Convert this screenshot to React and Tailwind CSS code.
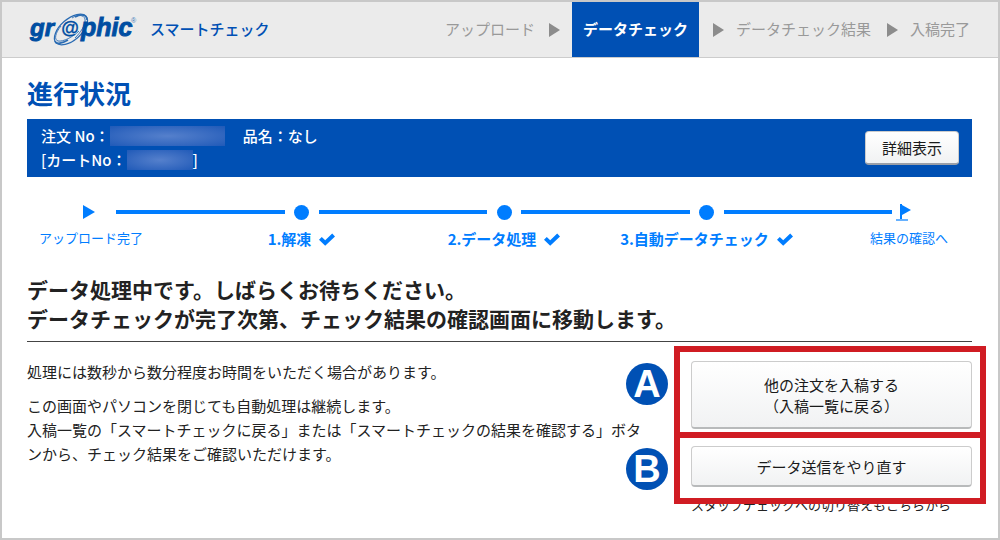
const steps = [
  { label: "1.解凍" },
  { label: "2.データ処理" },
  { label: "3.自動データチェック" },
];

function Logo() {
  return (
    <svg width="108" height="40" viewBox="0 -4 108 40" role="img" aria-label="gr@phic" className="shrink-0 overflow-visible">
      <g fill="none" stroke="#2b6cb3">
        <ellipse cx="41" cy="15.5" rx="20" ry="10.5" strokeWidth="1.2" transform="rotate(-41 41 15.5)" />
        <path d="M42 4C48 0 54 1 55 5C56 11 50 19 45 24" strokeWidth="0.9" />
        <path d="M31 12C25 19 24 26 28 27C33 28 43 23 49 17" strokeWidth="0.9" />
        <path d="M25 27C26 31 33 29 38 26" strokeWidth="1.6" />
        <path d="M45 3C52 -1 57 1 57 6" strokeWidth="1.6" />
      </g>
      <g
        fill="#004ea2"
        stroke="#004ea2"
        strokeWidth="0.9"
        fontFamily="'Liberation Sans', sans-serif"
        fontStyle="italic"
        fontWeight="700"
      >
        <text x="0" y="22" fontSize="24">gr</text>
        <text x="31" y="20" fontSize="18" strokeWidth="0.3">@</text>
        <text x="51" y="22" fontSize="25">phic</text>
      </g>
      <text x="101" y="9" fontSize="7" fill="#3c78b9" fontFamily="'Liberation Sans', sans-serif">®</text>
    </svg>
  );
}

function Arrow() {
  return (
    <svg width="11" height="14" viewBox="0 0 11 14" fill="#8c8c8c" aria-hidden="true" className="shrink-0">
      <path d="M0 0L11 7L0 14Z" />
    </svg>
  );
}

function Header() {
  return (
    <header className="flex h-14 items-stretch justify-between border-b border-[#cccccc] bg-[#ebebeb] px-7 whitespace-nowrap">
      <div className="flex items-center gap-3">
        <Logo />
        <span className="text-[15px] font-medium text-[#0050b4]">スマートチェック</span>
      </div>
      <ol className="flex items-center text-[15px] text-[#999999]">
        <li className="flex items-center gap-[14px] pr-3">
          アップロード
          <Arrow />
        </li>
        <li aria-current="step" className="flex items-center self-stretch bg-[#0050b4] px-[11px] font-bold text-white">
          データチェック
        </li>
        <li className="flex items-center gap-3 pl-[14px]">
          <Arrow />
          データチェック結果
        </li>
        <li className="flex items-center gap-3 pl-4">
          <Arrow />
          入稿完了
        </li>
      </ol>
    </header>
  );
}

function Line() {
  return (
    <li aria-hidden="true" className="flex h-5 flex-1 items-center">
      <span className="h-1 w-full bg-[#007dff]" />
    </li>
  );
}

function StepItem({ label }) {
  return (
    <>
      <Line />
      <li className="flex w-[34px] flex-col items-center">
        <span className="flex h-5 items-center">
          <span className="size-[15px] rounded-full bg-current" />
        </span>
        <span className="mt-[7px] flex items-center gap-2 text-[15px] leading-5 font-bold">
          {label}
          <svg width="16" height="13" viewBox="0 0 16 13" fill="currentColor" role="img" aria-label="完了">
            <path d="M0 6.8L2.8 4L6.2 7.2L13.2 0.6L16 3.4L6.2 12.8Z" />
          </svg>
        </span>
      </li>
    </>
  );
}

function Stepper() {
  return (
    <ol className="mt-[25px] flex items-start pr-[46px] pl-[39px] whitespace-nowrap text-[#007dff]">
      <li className="flex w-[50px] flex-col items-center">
        <svg width="16" height="20" viewBox="0 0 16 20" fill="currentColor" aria-hidden="true">
          <path d="M0 3L12 10L0 17Z" />
        </svg>
        <span className="mt-1.5 text-[13px] leading-5">アップロード完了</span>
      </li>
      {steps.map((step) => (
        <StepItem key={step.label} label={step.label} />
      ))}
      <Line />
      <li className="flex w-[34px] flex-col items-center">
        <svg width="26" height="20" viewBox="0 0 26 20" fill="currentColor" aria-hidden="true">
          <path d="M4 2H6V17H4Z" />
          <path d="M6 3L15 8L6 13Z" />
          <path d="M0 17H12V19H0Z" opacity="0.6" />
        </svg>
        <span className="mt-1.5 text-[13px] leading-5">結果の確認へ</span>
      </li>
    </ol>
  );
}

const buttonStyle =
  "w-full cursor-pointer rounded-sm border border-[#cccccc] border-b-2 border-b-[#b8babb] bg-linear-to-b from-white to-[#f1f2f3] text-[15px] leading-[21px] text-[#1a1a1a]";

function Marker({ children }) {
  return (
    <span className="absolute top-0.5 -left-[65px] flex size-[42px] items-center justify-center rounded-full bg-[#0050b4] font-['Liberation_Sans',sans-serif] text-[38px] leading-none font-bold text-white">
      {children}
    </span>
  );
}

export default function App() {
  return (
    <div className="min-h-screen border-2 border-[#c8c8c8] bg-white font-['Noto_Sans_CJK_JP',sans-serif] text-[#222222]">
      <Header />

      <main className="pr-[26px] pl-[25px]">
        <h1 className="pt-[17px] pb-2 text-[26px] leading-9 font-bold text-[#0050b4]">進行状況</h1>

        {/* 注文情報 */}
        <section className="flex items-center justify-between bg-[#0050b4] py-[5px] pr-[13px] pl-[14px] text-[15px] leading-6 font-medium text-white">
          <div>
            <p className="flex items-center">
              注文 No：
              <span className="h-5 w-[115px] bg-radial from-[#5580cc] to-[#1f5ab8]" />
              <span className="ml-[18px]">品名：なし</span>
            </p>
            <p className="flex items-center">
              [カートNo：
              <span className="h-5 w-[66px] bg-radial from-[#5580cc] to-[#1f5ab8]" />]
            </p>
          </div>
          <button
            type="button"
            className="h-[34px] w-[94px] cursor-pointer rounded-sm border border-[#cccccc] border-b-2 border-b-[#9a9fa8] bg-linear-to-b from-white to-[#f1f2f3] text-[15px] leading-[21px] font-normal text-[#1a1a1a]"
          >
            詳細表示
          </button>
        </section>

        <Stepper />

        <h2 className="mt-[26px] border-b border-[#444444] pb-2 text-[21px] leading-[29px] font-bold">
          データ処理中です。しばらくお待ちください。
          <br />
          データチェックが完了次第、チェック結果の確認画面に移動します。
        </h2>

        <div className="flex items-start justify-between">
          <div className="w-[622px] pt-[18px] text-[15px] leading-6">
            <p>処理には数秒から数分程度お時間をいただく場合があります。</p>
            <p className="mt-[10px]">
              この画面やパソコンを閉じても自動処理は継続します。
              <br />
              入稿一覧の「スマートチェックに戻る」または「スマートチェックの結果を確認する」ボタンから、チェック結果をご確認いただけます。
            </p>
          </div>

          <div className="w-[281px] shrink-0 pt-[19px]">
            <div className="relative">
              <button type="button" className={`${buttonStyle} block h-[68px]`}>
                他の注文を入稿する
                <br />
                （入稿一覧に戻る）
              </button>
              <span className="pointer-events-none absolute -top-[15px] -right-[14px] -bottom-[9px] -left-[17px] border-6 border-[#d01c23]" />
              <Marker>A</Marker>
            </div>
            <div className="relative z-10 mt-[17px]">
              <button type="button" className={`${buttonStyle} block h-[41px]`}>
                データ送信をやり直す
              </button>
              <span className="pointer-events-none absolute -top-[14px] -right-[14px] -bottom-[17px] -left-[17px] border-6 border-[#d01c23]" />
              <Marker>B</Marker>
            </div>
            <p className="mt-2 text-[13px] leading-5 whitespace-nowrap">スタッフチェックへの切り替えもこちらから</p>
          </div>
        </div>
      </main>
    </div>
  );
}
